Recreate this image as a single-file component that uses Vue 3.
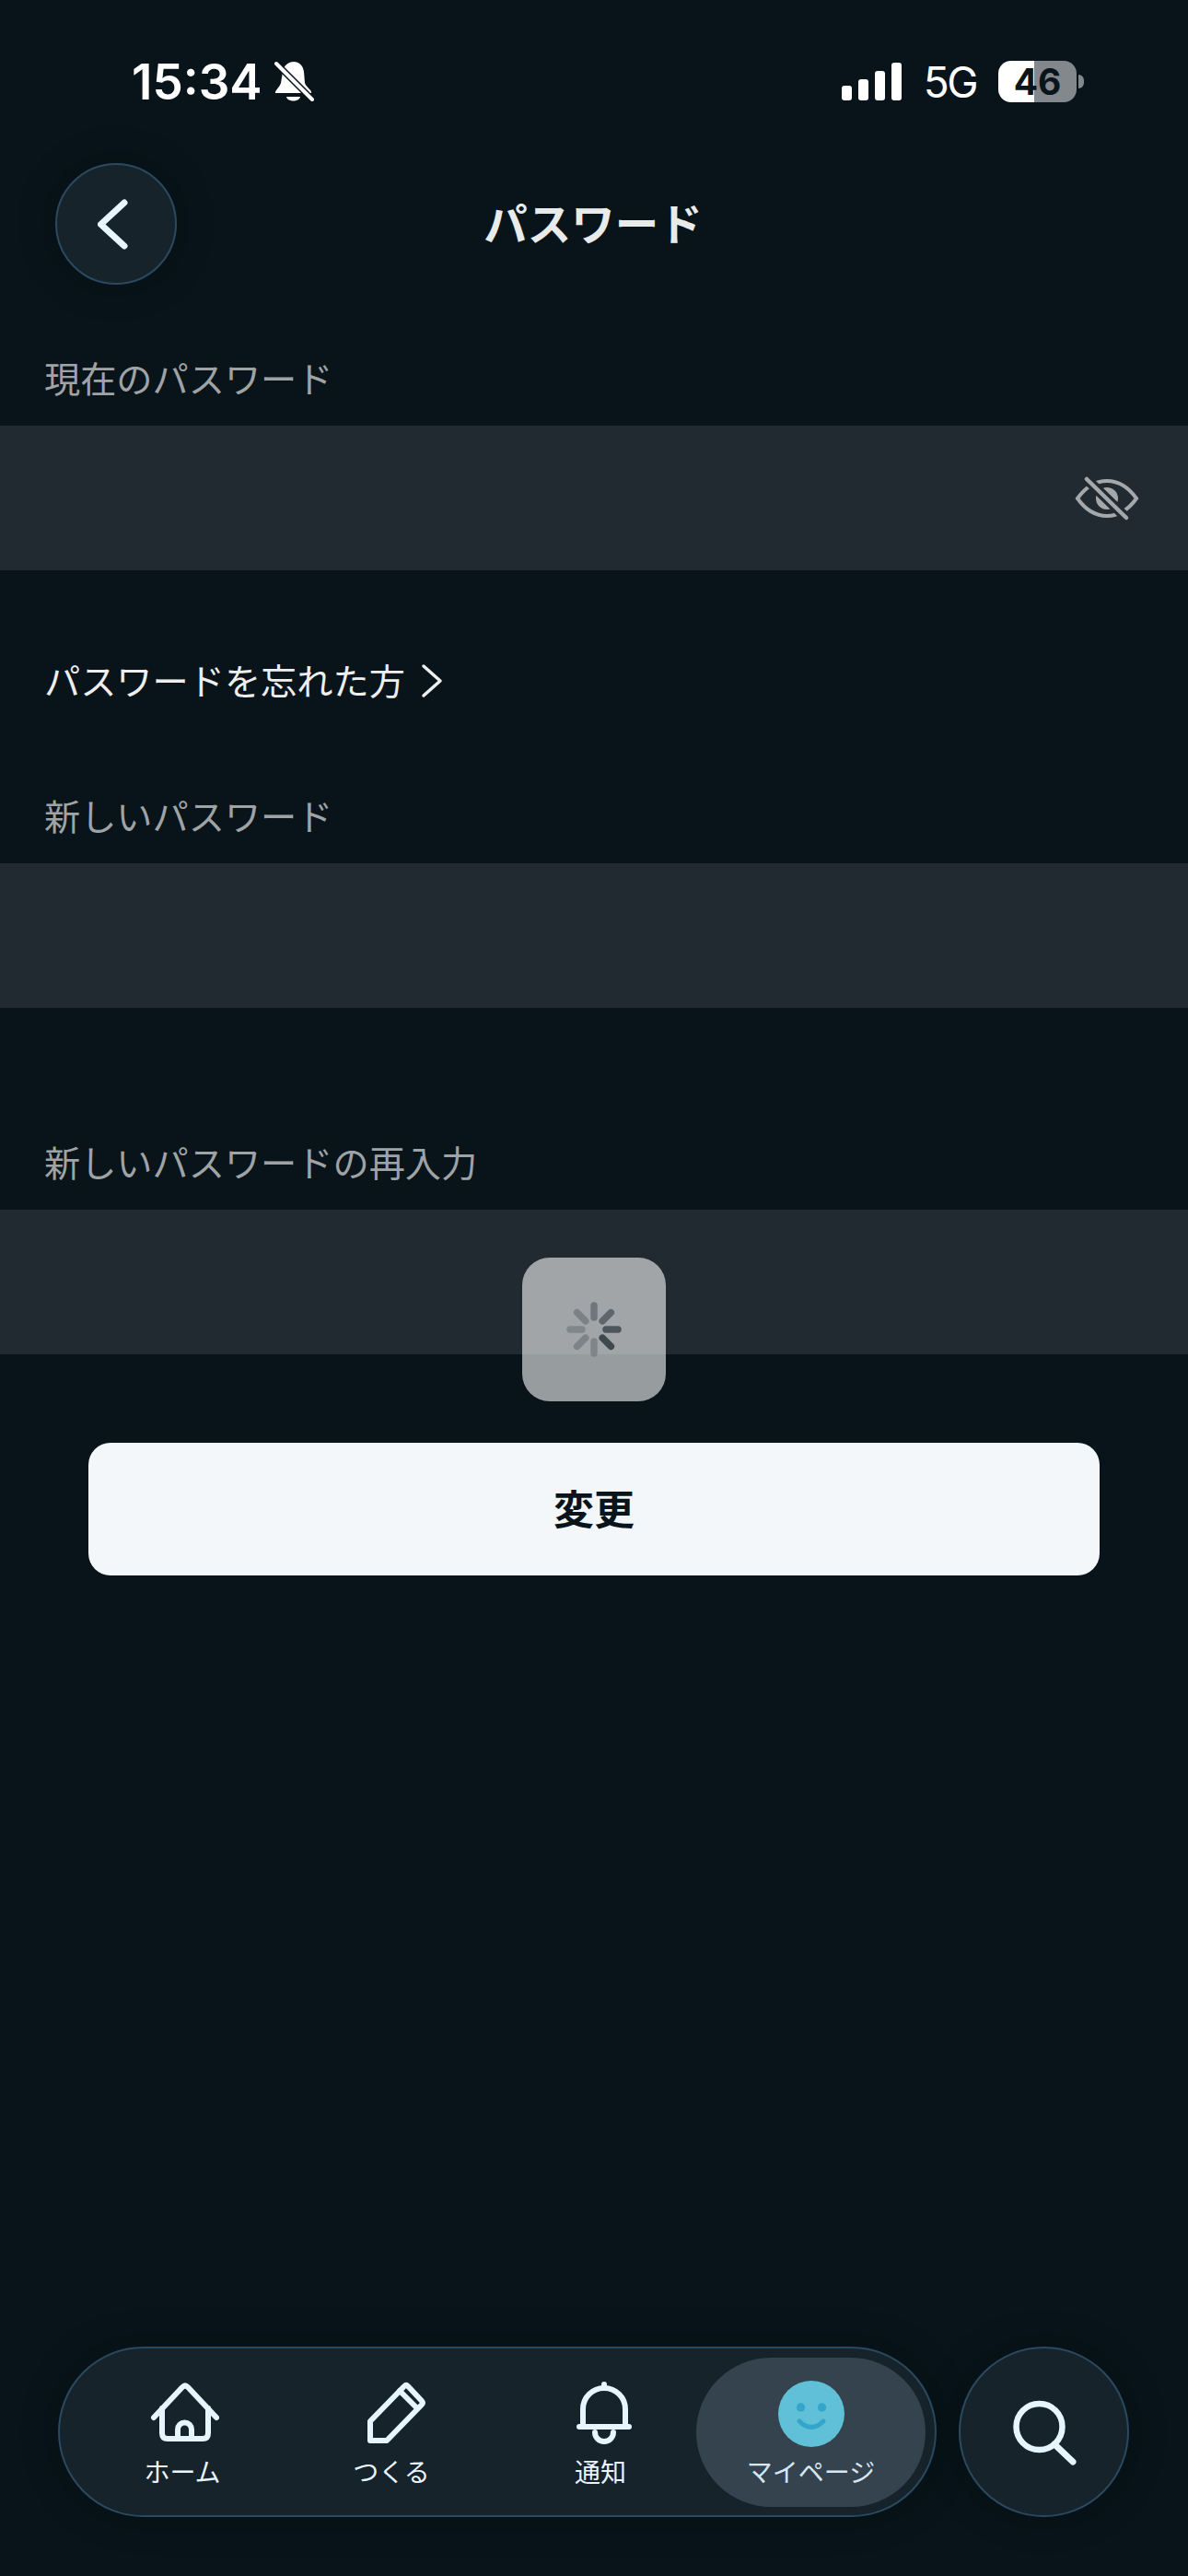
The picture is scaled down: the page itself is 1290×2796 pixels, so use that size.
<template>
  <div class="page">
    <!-- ステータスバー -->
    <div class="status-bar">
      <div class="status-left">
        <span class="time">15:34</span>
        <svg class="mute" width="44" height="46" viewBox="0 0 44 46">
          <path fill="#fff" d="M22 1C28 1 32 5 33 12L34 24C35 28 42 32 41 35H2C1 33 7 28 8 24L10 12C11 5 16 1 22 1Z" />
          <path fill="#fff" d="M14 39H29C28 45 15 45 14 39Z" />
          <path stroke="#08141a" stroke-width="7" d="M3 3L42 42" />
          <path stroke="#fff" stroke-width="4" stroke-linecap="round" d="M3 3L42 42" />
        </svg>
      </div>
      <div class="status-right">
        <svg width="65" height="41" viewBox="0 0 65 41">
          <rect v-for="bar in signalBars" :key="bar.x" :x="bar.x" :y="bar.y" width="11" :height="41 - bar.y" rx="3" fill="#fff" />
        </svg>
        <span class="network">5G</span>
        <div class="battery-wrap">
          <div class="battery">46</div>
          <span class="battery-nub"></span>
        </div>
      </div>
    </div>

    <header class="header">
      <button class="back-btn">
        <svg class="back-icon" width="40" height="60" viewBox="0 0 40 60">
          <path d="M29 7L3.5 30.5L29 54" class="icon-line" stroke-width="7" />
        </svg>
      </button>
      <h1 class="title">パスワード</h1>
    </header>

    <section class="form">
      <label class="label first">現在のパスワード</label>
      <div class="field">
        <svg class="eye" width="72" height="48" viewBox="0 0 72 48">
          <path d="M4 24C14 10 24 5 36 5C48 5 58 10 68 24C58 38 48 43 36 43C24 43 14 38 4 24Z" fill="none" stroke="#a4a8ab" stroke-width="4" />
          <circle cx="36" cy="24" r="12" fill="#a4a8ab" />
          <path d="M14 3L57 45" stroke="#222a31" stroke-width="11" />
          <path d="M14 3L57 45" stroke="#a4a8ab" stroke-width="4.5" stroke-linecap="round" />
        </svg>
      </div>

      <a class="forgot">
        パスワードを忘れた方
        <svg class="forgot-icon" width="24" height="38" viewBox="0 0 24 38">
          <path d="M3 3L21 19L3 35" fill="none" stroke="#eeeeee" stroke-width="3.5" stroke-linecap="round" stroke-linejoin="round" />
        </svg>
      </a>

      <label class="label second">新しいパスワード</label>
      <div class="field"></div>

      <label class="label third">新しいパスワードの再入力</label>
      <div class="field"></div>

      <button class="submit">変更</button>
    </section>

    <!-- ローディング -->
    <div class="loading">
      <svg width="72" height="72" viewBox="-36 -36 72 72">
        <line
          v-for="spoke in spokes"
          :key="spoke.angle"
          x1="0"
          y1="-26"
          x2="0"
          y2="-13"
          stroke-width="7.5"
          stroke-linecap="round"
          :stroke="spoke.color"
          :transform="`rotate(${spoke.angle})`"
        />
      </svg>
    </div>

    <footer class="bottom">
      <nav class="nav">
        <div class="nav-main">
          <div class="nav-item">
            <svg class="nav-icon" width="80" height="72" viewBox="0 0 80 72">
              <path class="icon-line" stroke-width="6" d="M9 40L40 7Q43 4 46 7L77 40" />
              <path class="icon-line" stroke-width="6" d="M18 30V57Q18 63 24 63H62Q68 63 68 57V30" />
              <path class="icon-line" stroke-width="6" d="M35 63V53a7.5 7.5 0 0 1 15 0V63" />
            </svg>
            <span class="nav-label">ホーム</span>
          </div>
          <div class="nav-item">
            <svg class="nav-icon" width="80" height="72" viewBox="0 0 80 72">
              <path class="icon-line" stroke-width="6" d="M17 44L54 6Q56 4 58 6L73 22Q75 24 73 26L35 65H17Z" />
              <path class="icon-line" stroke-width="6" d="M49 11L68 30" />
            </svg>
            <span class="nav-label">つくる</span>
          </div>
          <div class="nav-item">
            <svg class="nav-icon" width="80" height="72" viewBox="0 0 80 72">
              <path class="icon-line" stroke-width="6" d="M17 50H71" />
              <path class="icon-line" stroke-width="6" d="M21 50V31a23 23 0 0 1 46 0V50" />
              <path class="icon-line" stroke-width="6" d="M44 4V8" />
              <path class="icon-line" stroke-width="6" d="M34 56a10 10 0 0 0 20 0" />
            </svg>
            <span class="nav-label">通知</span>
          </div>
        </div>
        <div class="nav-item active">
          <svg class="nav-icon" width="72" height="72" viewBox="0 0 72 72">
            <circle cx="36" cy="36" r="36" fill="#5fc0d8" />
            <circle cx="24.5" cy="29" r="4.7" fill="#34a6c9" />
            <circle cx="47.5" cy="29" r="4.7" fill="#34a6c9" />
            <path d="M23 44Q36 57 49 44" fill="none" stroke="#34a6c9" stroke-width="5" stroke-linecap="round" />
          </svg>
          <span class="nav-label">マイページ</span>
        </div>
      </nav>
      <button class="search-btn">
        <svg width="72" height="72" viewBox="0 0 72 72">
          <circle cx="30.5" cy="30" r="25" class="icon-line" stroke-width="6.5" />
          <path class="icon-line" stroke-width="7" d="M47 49L67 68" />
        </svg>
      </button>
    </footer>
  </div>
</template>

<script setup>
const signalBars = [
  { x: 0, y: 25 },
  { x: 18, y: 18 },
  { x: 36, y: 9 },
  { x: 54, y: 0 },
]

const spokeColors = ['#70767d', '#5e666b', '#4f565b', '#3f484d', '#7f868a', '#7d8488', '#80878b', '#7b8286']
const spokes = spokeColors.map((color, i) => ({ angle: i * 45, color }))
</script>

<style>
html,
body {
  margin: 0;
  background: #08141a;
}
</style>

<style scoped>
.page {
  position: relative;
  width: 1290px;
  height: 2796px;
  display: flex;
  flex-direction: column;
  background: #08141a;
  font-family: "Noto Sans CJK JP", "Liberation Sans", sans-serif;
  overflow: hidden;
}

.status-bar {
  height: 177px;
  flex-shrink: 0;
  display: flex;
  align-items: center;
  justify-content: space-between;
  padding: 0 113px 0 143px;
  box-sizing: border-box;
  color: #fff;
  font-family: Inter, "Liberation Sans", sans-serif;
}

.status-left {
  display: flex;
  align-items: center;
  gap: 12px;
}

.time {
  font-size: 53px;
  font-weight: 600;
  line-height: 60px;
}

.status-right {
  display: flex;
  align-items: center;
  gap: 24px;
}

.network {
  font-size: 46px;
  line-height: 50px;
  font-weight: 400;
  letter-spacing: -2.5px;
}

.battery-wrap {
  display: flex;
  align-items: center;
  gap: 2px;
}

.battery {
  width: 85px;
  height: 45px;
  border-radius: 14px;
  background: linear-gradient(90deg, #fff 0 46%, #83888c 46%);
  color: #0a151b;
  font-size: 39px;
  font-weight: 700;
  line-height: 45px;
  text-align: center;
}

.battery-nub {
  width: 6px;
  height: 15px;
  border-radius: 0 6px 6px 0;
  background: #83888c;
}

.header {
  display: grid;
  grid-template-columns: 132px 1fr 132px;
  align-items: center;
  padding: 0 60px;
}

.back-btn,
.search-btn {
  padding: 0;
  display: flex;
  align-items: center;
  justify-content: center;
  border: 2px solid #2a4a60;
  border-radius: 50%;
  background: #16232b;
  box-sizing: border-box;
  box-shadow: 0 0 40px rgba(0, 0, 0, 0.25);
}

.back-btn {
  width: 132px;
  height: 132px;
}

.title {
  margin: 0 2px 0 0;
  padding-bottom: 4px;
  text-align: center;
  font-size: 47.5px;
  font-weight: 700;
  line-height: 60px;
  color: #e9ebeb;
}

.icon-line {
  fill: none;
  stroke: #e6f5ff;
  stroke-linecap: round;
  stroke-linejoin: round;
}

.form {
  display: flex;
  flex-direction: column;
}

.label {
  height: 60px;
  margin: 0 0 20px;
  padding-left: 48px;
  font-size: 39.2px;
  line-height: 54px;
  color: #9fa3a5;
}

.label.first {
  margin-top: 73px;
}

.label.second {
  margin-top: 90px;
}

.label.third {
  margin-top: 139px;
}

.field {
  height: 157px;
  display: flex;
  align-items: center;
  justify-content: flex-end;
  padding-right: 52px;
  background: #222a31;
}

.forgot {
  height: 60px;
  margin-top: 88px;
  padding-left: 48px;
  display: flex;
  align-items: center;
  gap: 17px;
  font-size: 39.2px;
  line-height: 60px;
  color: #eeeeee;
}

.forgot-icon {
  margin-top: 4px;
}

.submit {
  height: 144px;
  margin: 96px 96px 0;
  padding: 0 0 4px;
  border: 0;
  border-radius: 24px;
  background: #f3f7fa;
  color: #0a151b;
  font-family: inherit;
  font-size: 44px;
  font-weight: 700;
}

.loading {
  position: absolute;
  left: 567px;
  top: 1365px;
  width: 156px;
  height: 156px;
  display: flex;
  align-items: center;
  justify-content: center;
  border-radius: 30px;
  background: rgba(255, 255, 255, 0.58);
}

.bottom {
  margin-top: auto;
  display: flex;
  align-items: center;
  gap: 24px;
  padding: 0 0 64px 63px;
}

.nav {
  width: 954px;
  height: 185px;
  flex-shrink: 0;
  display: flex;
  align-items: center;
  justify-content: space-between;
  padding: 0 10px 0 38px;
  box-sizing: border-box;
  border: 2px solid #2a4a60;
  border-radius: 93px;
  background: #16232b;
  box-shadow: 0 0 40px rgba(0, 0, 0, 0.25);
}

.nav-main {
  display: flex;
  gap: 37px;
}

.nav-item {
  width: 190px;
  height: 162px;
  flex-shrink: 0;
  box-sizing: border-box;
  padding-top: 25px;
  display: flex;
  flex-direction: column;
  align-items: center;
  gap: 6px;
}

.nav-item.active {
  width: 249px;
  border-radius: 81px;
  background: #34434e;
}

.nav-icon {
  flex-shrink: 0;
}

.nav-label {
  font-size: 28px;
  line-height: 40px;
  color: #e8f5fe;
  white-space: nowrap;
}

.nav-item.active .nav-label {
  color: #d8e7ef;
}

.search-btn {
  width: 185px;
  height: 185px;
  flex-shrink: 0;
}
</style>
